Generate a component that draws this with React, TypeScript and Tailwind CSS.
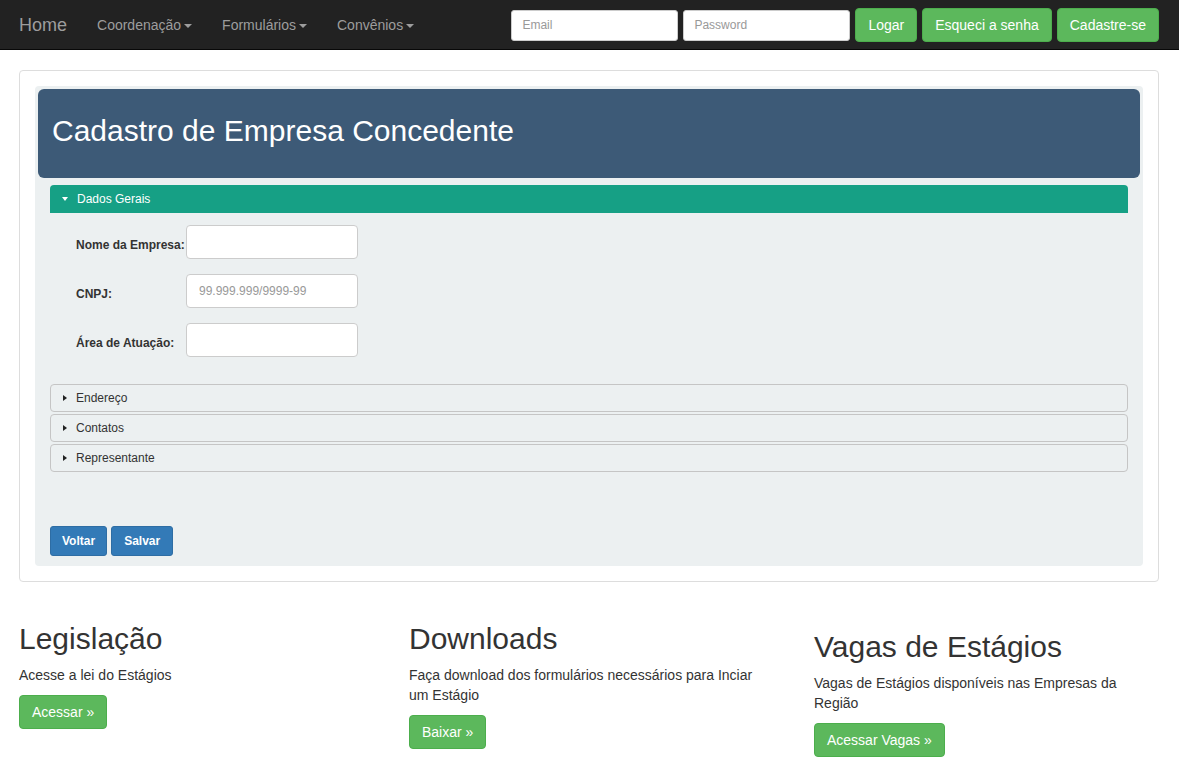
const Caret = () => (
  <span className="ml-[3px] inline-block h-0 w-0 border-x-[4px] border-t-[4px] border-x-transparent border-t-[#9d9d9d] align-middle" />
);

const Section = ({ title }: { title: string }) => (
  <div className="flex h-[28px] items-center rounded-[4px] border border-[#c5c5c5] bg-[#ecf0f1] pl-[12px] text-[12px] text-[#333]">
    <span className="mr-[9px] inline-block h-0 w-0 border-y-[3px] border-l-[4px] border-y-transparent border-l-[#222]" />
    {title}
  </div>
);

const Field = ({ label, placeholder }: { label: string; placeholder?: string }) => (
  <div className="flex items-center">
    <label className="w-[110px] pt-[6px] text-[12px] font-bold text-[#333]">{label}</label>
    <input
      className="h-[34px] w-[172px] rounded-[4px] border border-[#ccc] bg-white px-[12px] text-[12px] outline-none placeholder:text-[#999]"
      placeholder={placeholder}
    />
  </div>
);

const GreenButton = ({ children }: { children: React.ReactNode }) => (
  <button className="h-[34px] rounded-[4px] border border-[#4cae4c] bg-[#5cb85c] px-[12px] text-[14px] text-white">
    {children}
  </button>
);

const App = () => {
  return (
    <div className="min-h-screen bg-white text-[14px] text-[#333]" style={{ fontFamily: '"Liberation Sans", Arial, sans-serif' }}>
      {/* navbar */}
      <div className="h-[50px] border-b border-[#080808] bg-[#222]">
        <div className="flex h-full items-center pl-[19px] pr-[20px] pt-[1px]">
          <span className="mr-[15px] text-[18px] text-[#9d9d9d]">Home</span>
          <span className="px-[15px] text-[#9d9d9d]">
            Coordenação
            <Caret />
          </span>
          <span className="px-[15px] text-[#9d9d9d]">
            Formulários
            <Caret />
          </span>
          <span className="px-[15px] text-[#9d9d9d]">
            Convênios
            <Caret />
          </span>
          <div className="ml-auto flex items-center gap-[5px]">
            <input
              className="h-[31px] w-[167px] rounded-[3px] border border-[#ccc] bg-white px-[10px] text-[12px] outline-none placeholder:text-[#999]"
              placeholder="Email"
            />
            <input
              className="h-[31px] w-[167px] rounded-[3px] border border-[#ccc] bg-white px-[10px] text-[12px] outline-none placeholder:text-[#999]"
              placeholder="Password"
            />
            <GreenButton>Logar</GreenButton>
            <GreenButton>Esqueci a senha</GreenButton>
            <GreenButton>Cadastre-se</GreenButton>
          </div>
        </div>
      </div>

      <div className="pl-[19px]">
        {/* main panel */}
        <div className="mt-[20px] w-[1140px] rounded-[4px] border border-[#ddd] p-[15px]">
          <div className="rounded-[4px] bg-[#ecf0f1] pb-[10px] pt-[3px]">
            <div className="mx-[3px] flex h-[89px] items-center rounded-[6px] bg-[#3d5a77] px-[14px] pb-[6px]">
              <h1 className="text-[30px] text-white">Cadastro de Empresa Concedente</h1>
            </div>
            <div className="px-[15px]">
              <div className="mt-[7px] flex h-[28px] items-center rounded-t-[4px] bg-[#16a085] pl-[12px] text-[12px] text-white">
                <span className="mr-[9px] inline-block h-0 w-0 border-x-[3.5px] border-t-[4px] border-x-transparent border-t-white" />
                Dados Gerais
              </div>
              <div className="flex flex-col gap-[15px] pl-[26px] pt-[12px]">
                <Field label="Nome da Empresa:" />
                <Field label="CNPJ:" placeholder="99.999.999/9999-99" />
                <Field label="Área de Atuação:" />
              </div>
              <div className="mt-[27px] flex flex-col gap-[2px]">
                <Section title="Endereço" />
                <Section title="Contatos" />
                <Section title="Representante" />
              </div>
              <div className="mt-[54px] flex gap-[4px]">
                <button className="h-[30px] rounded-[3px] border border-[#2e6da4] bg-[#337ab7] px-[11px] text-[12px] font-bold text-white">
                  Voltar
                </button>
                <button className="h-[30px] rounded-[3px] border border-[#2e6da4] bg-[#337ab7] px-[12px] text-[12px] font-bold text-white">
                  Salvar
                </button>
              </div>
            </div>
          </div>
        </div>

        {/* columns */}
        <div className="mt-[20px] flex">
          <div className="w-[390px] pr-[30px]">
            <h2 className="mb-[10px] mt-[20px] text-[30px] leading-[33px]">Legislação</h2>
            <p className="mb-[10px] leading-[20px]">Acesse a lei do Estágios</p>
            <GreenButton>Acessar »</GreenButton>
          </div>
          <div className="w-[405px] pr-[45px]">
            <h2 className="mb-[10px] mt-[20px] text-[30px] leading-[33px]">Downloads</h2>
            <p className="mb-[10px] leading-[20px]">Faça download dos formulários necessários para Inciar um Estágio</p>
            <GreenButton>Baixar »</GreenButton>
          </div>
          <div className="w-[345px]">
            <h2 className="mb-[10px] mt-[28px] text-[30px] leading-[33px]">Vagas de Estágios</h2>
            <p className="mb-[10px] leading-[20px]">Vagas de Estágios disponíveis nas Empresas da Região</p>
            <GreenButton>Acessar Vagas »</GreenButton>
          </div>
        </div>
      </div>
    </div>
  );
};

export default App;
